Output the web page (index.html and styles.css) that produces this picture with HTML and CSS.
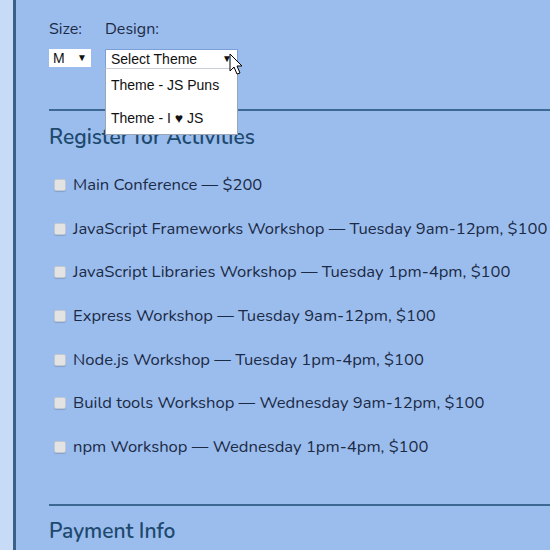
FILE: index.html
```html
<!DOCTYPE html>
<html lang="en">
<head>
<meta charset="utf-8">
<link rel="stylesheet" href="styles.css">
</head>
<body>
<div class="page">
  <div class="shirt">
    <div class="field">
      <div class="label">Size:</div>
      <div class="select size-select"><span>M</span><span class="arrow">▼</span></div>
    </div>
    <div class="field">
      <div class="label">Design:</div>
      <div class="select design-select"><span>Select Theme</span><span class="arrow">▼</span>
        <div class="menu">
          <div class="opt">Theme - JS Puns</div>
          <div class="opt">Theme - I ♥ JS</div>
        </div>
        <svg class="cursor" width="16" height="24" viewBox="0 0 16 24"><path d="M1 1 L1 18 L5 14 L8 21 L11 20 L8 13 L13 13 Z" fill="#fff" stroke="#000" stroke-width="1" stroke-linejoin="round"/></svg>
      </div>
    </div>
  </div>
  <section class="activities">
    <h2>Register for Activities</h2>
    <label class="item"><span class="box"></span>Main Conference — $200</label>
    <label class="item"><span class="box"></span>JavaScript Frameworks Workshop — Tuesday 9am-12pm, $100</label>
    <label class="item"><span class="box"></span>JavaScript Libraries Workshop — Tuesday 1pm-4pm, $100</label>
    <label class="item"><span class="box"></span>Express Workshop — Tuesday 9am-12pm, $100</label>
    <label class="item"><span class="box"></span>Node.js Workshop — Tuesday 1pm-4pm, $100</label>
    <label class="item"><span class="box"></span>Build tools Workshop — Wednesday 9am-12pm, $100</label>
    <label class="item"><span class="box"></span>npm Workshop — Wednesday 1pm-4pm, $100</label>
  </section>
  <section class="payment">
    <h2>Payment Info</h2>
  </section>
</div>
</body>
</html>
```
FILE: styles.css
```css
html, body {
  margin: 0;
  padding: 0;
  height: 100%;
  overflow: hidden;
}
body {
  background: #c8dbf6;
  font-family: "Nunito", "Lato", "Open Sans", sans-serif;
  color: #1b2b46;
}
.page {
  margin-left: 13px;
  border-left: 3px solid #3a5f88;
  background: #9bbdee;
  min-height: 100%;
  padding-left: 33px;
  padding-top: 18px;
  box-sizing: border-box;
}
.shirt {
  display: flex;
  gap: 14px;
  padding-bottom: 40px;
  border-bottom: 2px solid #3d6894;
}
.label {
  font-size: 16px;
  line-height: 22px;
  margin-bottom: 9px;
}
.select {
  position: relative;
  background: #fff;
  font-family: "Liberation Sans", Arial, sans-serif;
  font-size: 14px;
  line-height: 16px;
  height: 16px;
  display: flex;
  justify-content: space-between;
  align-items: center;
  color: #111;
  box-sizing: content-box;
}
.size-select {
  width: 34px;
  padding: 1px 4px;
  margin-top: 1px;
  border: 0;
}
.arrow {
  font-size: 10px;
}
.design-select {
  width: 121px;
  padding: 1px 5px 1px 5px;
  border: 1px solid #7b9fd6;
}
.menu {
  position: absolute;
  left: -1px;
  right: -1px;
  top: 18px;
  height: 67px;
  background: #fff;
  border: 1px solid #9aa5b5;
  border-top: 1px solid #c9d0da;
  box-sizing: border-box;
  padding-left: 5px;
}
.opt {
  height: 33px;
  line-height: 33px;
}
.cursor {
  position: absolute;
  left: 123px;
  top: 3px;
}
h2 {
  margin: 0;
  font-weight: 600;
  font-size: 21px;
  color: #1e4a6e;
}
.activities {
  padding-top: 12px;
  padding-bottom: 35px;
  border-bottom: 2px solid #3d6894;
}
.activities h2 {
  margin-bottom: 12px;
}
.item {
  display: flex;
  align-items: center;
  font-size: 16.6px;
  height: 43.7px;
  line-height: 22px;
  white-space: nowrap;
}
.box {
  width: 10px;
  height: 10px;
  background: #e3e3e3;
  border: 1px solid #c2c8d2;
  border-radius: 2px;
  margin-left: 5px;
  margin-right: 7px;
  box-shadow: 0 1px 1px rgba(0,0,0,0.15);
  flex: none;
}
.payment {
  padding-top: 11px;
}
```
